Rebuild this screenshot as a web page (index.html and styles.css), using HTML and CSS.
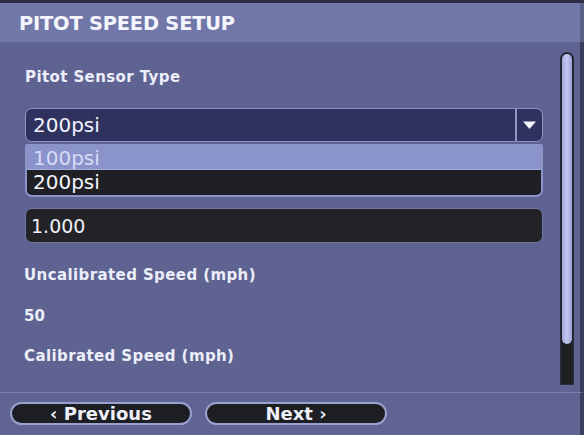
FILE: index.html
```html
<!DOCTYPE html>
<html>
<head>
<meta charset="utf-8">
<link rel="stylesheet" href="styles.css">
</head>
<body>
<div class="screen">
  <div class="topedge"></div>
  <div class="header"><h1 class="title">PITOT SPEED SETUP</h1></div>
  <div class="main">
    <div class="content">
      <div class="label first">Pitot Sensor Type</div>
      <div class="select">
        <span class="select-value">200psi</span>
        <span class="select-btn">
          <svg width="15" height="10" viewBox="0 0 15 10"><path d="M1 1.5 L14 1.5 L7.5 9 Z" fill="#f2f4fb"/></svg>
        </span>
      </div>
      <div class="list">
        <div class="opt hi">100psi</div>
        <div class="opt sel">200psi</div>
      </div>
      <div class="input">1.000</div>
      <div class="label gap1">Uncalibrated Speed (mph)</div>
      <div class="value">50</div>
      <div class="label gap2">Calibrated Speed (mph)</div>
    </div>
    <div class="scroll">
      <div class="thumb"></div>
    </div>
  </div>
  <div class="footer">
    <div class="pill prev">‹ Previous</div>
    <div class="pill next">Next ›</div>
  </div>
</div>
</body>
</html>
```

FILE: styles.css
```css
* { box-sizing: border-box; }
html, body { margin: 0; padding: 0; }
body {
  width: 584px;
  height: 435px;
  overflow: hidden;
  background: #5e6391;
  font-family: "DejaVu Sans", "Liberation Sans", sans-serif;
  color: #eef0fa;
}
.screen {
  width: 584px;
  height: 435px;
  display: flex;
  flex-direction: column;
}
.topedge {
  height: 3px;
  background: #2c2f45;
}
.header {
  height: 39px;
  background: #7178a9;
  border-right: 4px solid #5a5f86;
  display: flex;
  align-items: center;
  padding-left: 19px;
}
.title {
  margin: 0;
  font-size: 20px;
  font-weight: bold;
  letter-spacing: -0.2px;
  color: #f4f5fc;
  transform: scaleX(0.97);
  transform-origin: left center;
}
.main {
  height: 351px;
  display: flex;
  background: #5e6391;
  border-right: 4px solid #3b3f5e;
  border-bottom: 1px solid #7c82b2;
}
.content {
  flex: 1;
  padding: 26px 17px 0 25px;
  display: flex;
  flex-direction: column;
}
.label {
  font-size: 15px;
  font-weight: bold;
  line-height: 18px;
  height: 18px;
  color: #eceefa;
  letter-spacing: 0.4px;
}
.gap1 { margin-top: 23px; margin-left: -1px; }
.gap2 { margin-top: 22px; margin-left: -1px; }
.value {
  margin-top: 23px;
  font-size: 15px;
  font-weight: bold;
  line-height: 18px;
  color: #eceefa;
  margin-left: -1px;
}
.select {
  margin-top: 22px;
  height: 34px;
  background: #2f315f;
  border: 1px solid #8a91c4;
  border-radius: 7px;
  display: flex;
  align-items: center;
}
.select-value {
  flex: 1;
  padding-left: 7px;
  font-size: 20px;
  color: #f2f3fb;
}
.select-btn {
  width: 27px;
  height: 100%;
  border-left: 2px solid #8f96c6;
  display: flex;
  align-items: center;
  justify-content: center;
}
.list {
  margin-top: 2px;
  height: 53px;
  border: 2px solid #8c93c6;
  border-radius: 2px 2px 7px 7px;
  background: #1f1f25;
  overflow: hidden;
  display: flex;
  flex-direction: column;
}
.opt {
  height: 24px;
  line-height: 24px;
  font-size: 20px;
  padding-left: 6px;
}
.opt.hi {
  background: #8b93cb;
  color: #d6dcf6;
  border-bottom: 1px solid #a7aedc;
}
.opt.sel {
  background: #1f1f25;
  color: #f4f5fb;
}
.input {
  margin-top: 11px;
  height: 35px;
  background: #232327;
  border: 1px solid #70769f;
  border-radius: 7px;
  font-size: 19px;
  padding-left: 5px;
  display: flex;
  align-items: center;
  color: #eef0f8;
}
.scroll {
  width: 14px;
  margin: 10px 6px 0 0;
  height: 333px;
  background: #1f2024;
  border: 1px solid #2a2c40;
  border-radius: 7px 7px 0 0;
  padding: 1px;
  display: flex;
  flex-direction: column;
}
.thumb {
  height: 290px;
  background: linear-gradient(90deg, #a3abe0, #c2c8ee 50%, #9aa2d8);
  border-radius: 6px;
}
.footer {
  flex: 1;
  background: #5f6493;
  border-right: 4px solid #3b3f5e;
  display: flex;
  align-items: flex-start;
  padding: 9px 0 0 10px;
  gap: 13px;
}
.pill {
  width: 182px;
  height: 23px;
  background: #1d1e23;
  border: 2px solid #9aa1cf;
  border-radius: 12px;
  display: flex;
  align-items: center;
  justify-content: center;
  font-size: 18px;
  font-weight: bold;
  color: #eef0fa;
  line-height: 1;
}
```
